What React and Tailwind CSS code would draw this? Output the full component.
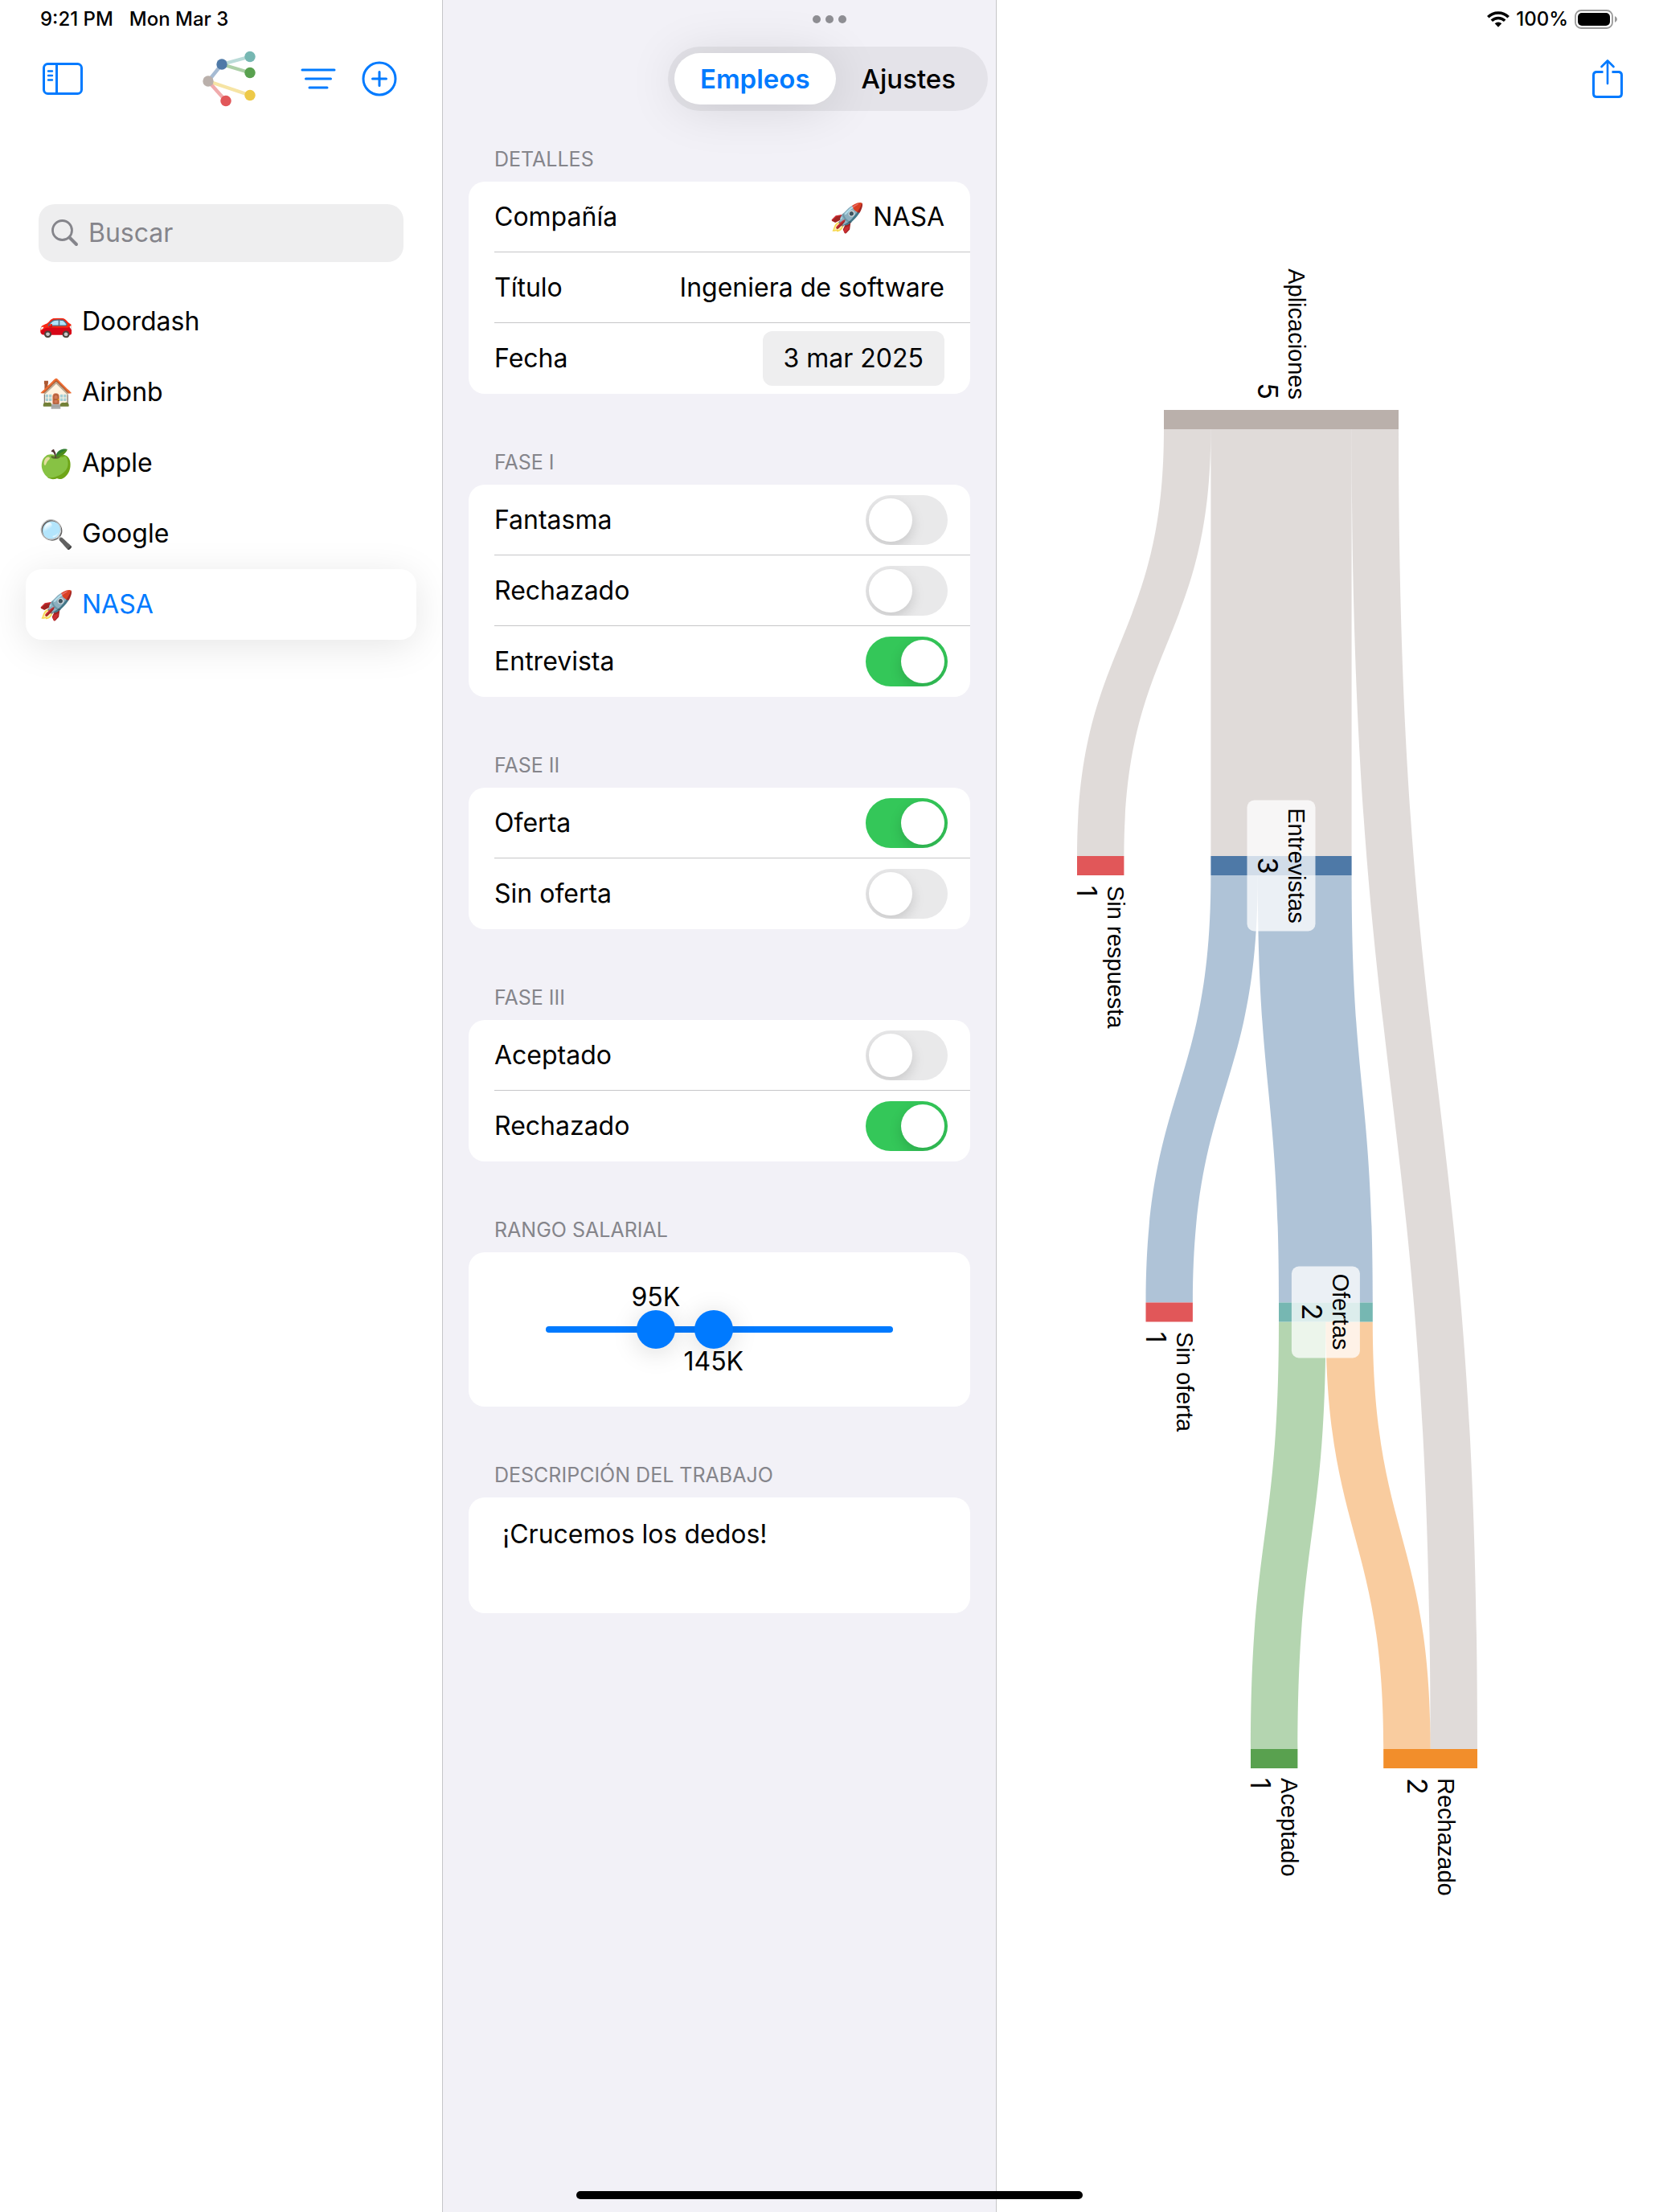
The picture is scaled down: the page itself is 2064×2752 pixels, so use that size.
import React, { useState } from "react";

const sans = "font-['Inter','Noto_Sans',sans-serif]";

function SidebarIcon() {
  return (
    <svg width="52" height="42" viewBox="0 0 52 42" fill="none" stroke="#007aff" strokeWidth="3" strokeLinecap="round">
      <rect x="2.5" y="2.5" width="47" height="37" rx="5" />
      <path d="M18.5 2.5V39.5" />
      <path d="M8 11.5H13M8 17H13M8 22.5H13" strokeWidth="2.4" />
    </svg>
  );
}

function Logo() {
  return (
    <svg width="66" height="70" viewBox="0 0 66 70" fill="none" strokeWidth="4.4">
      <path d="M7 38L24 17" stroke="#a6bbd3" />
      <path d="M24 17L59 7.5" stroke="#badbd8" />
      <path d="M24 17L59 27.5" stroke="#acd0a7" />
      <path d="M7 38L59 55.5" stroke="#f6e4a4" />
      <path d="M7 38L29 62.5" stroke="#f0abac" />
      <circle cx="7" cy="38" r="6.7" fill="#bab0ab" />
      <circle cx="24" cy="17" r="6.7" fill="#4e79a7" />
      <circle cx="59" cy="7.5" r="6.7" fill="#76b7b2" />
      <circle cx="59" cy="27.5" r="6.7" fill="#59a14f" />
      <circle cx="59" cy="55.5" r="6.7" fill="#edc948" />
      <circle cx="29" cy="62.5" r="6.7" fill="#e15759" />
    </svg>
  );
}

function FilterIcon() {
  return (
    <svg width="44" height="44" viewBox="0 0 44 44" fill="none" stroke="#007aff" strokeWidth="3" strokeLinecap="round">
      <path d="M2 11H42M6.5 22H37.5M11 33H33" />
    </svg>
  );
}

function AddIcon() {
  return (
    <svg width="44" height="44" viewBox="0 0 44 44" fill="none" stroke="#007aff" strokeWidth="3" strokeLinecap="round">
      <circle cx="22" cy="22" r="20" />
      <path d="M22 13.5V30.5M13.5 22H30.5" />
    </svg>
  );
}

function ShareIcon() {
  return (
    <svg width="40" height="50" viewBox="0 0 40 50" fill="none" stroke="#007aff" strokeWidth="3" strokeLinecap="round" strokeLinejoin="round">
      <path d="M14.5 16.5H6.5Q2.5 16.5 2.5 20.5V43.5Q2.5 47.5 6.5 47.5H33.5Q37.5 47.5 37.5 43.5V20.5Q37.5 16.5 33.5 16.5H25.5" strokeLinecap="butt" />
      <path d="M20 31V3M12.5 10L20 2.5L27.5 10" strokeWidth="2.6" />
    </svg>
  );
}

function SearchIcon() {
  return (
    <svg width="34" height="34" viewBox="0 0 34 34" fill="none" stroke="#85858b" strokeWidth="2.8" strokeLinecap="round">
      <circle cx="13.5" cy="13.5" r="12" />
      <path d="M22.5 22.5L31 31" strokeWidth="4" />
    </svg>
  );
}

function WifiIcon() {
  return (
    <svg width="28" height="20" viewBox="0 0 28 20" fill="none" stroke="#000" strokeWidth="3.6">
      <path d="M1.3 7.2A18 18 0 0 1 26.7 7.2" />
      <path d="M5.8 11.8A11.8 11.8 0 0 1 22.2 11.8" />
      <path d="M9.7 15.3A6.2 6.2 0 0 1 18.3 15.3L14 19.8Z" fill="#000" stroke="none" />
    </svg>
  );
}

function BatteryIcon() {
  return (
    <svg width="54" height="24" viewBox="0 0 54 24">
      <rect x="1" y="1" width="46" height="22" rx="7" fill="none" stroke="#999" strokeWidth="1.8" />
      <rect x="4" y="4" width="40" height="16" rx="5" fill="#000" />
      <path d="M50 8Q53 9.5 53 12Q53 14.5 50 16Z" fill="#999" />
    </svg>
  );
}

const jobs = [
  { emoji: "🚗", name: "Doordash" },
  { emoji: "🏠", name: "Airbnb" },
  { emoji: "🍏", name: "Apple" },
  { emoji: "🔍", name: "Google" },
  { emoji: "🚀", name: "NASA" },
];

function Company({ emoji, name }) {
  return (
    <span className="flex items-center gap-2.5">
      <span className="flex w-11 justify-center text-[35px]">{emoji}</span>
      <span>{name}</span>
    </span>
  );
}

function Sidebar() {
  return (
    <aside className="min-w-0 border-r border-[#c6c6c8]">
      <div className="flex h-12 items-center gap-5 pl-[50px] text-2xl font-medium">
        <span>9:21 PM</span>
        <span>Mon Mar 3</span>
      </div>
      <div className="flex h-[100px] items-center pl-[52px] pr-14">
        <button aria-label="Barra lateral"><SidebarIcon /></button>
        <span className="ml-auto"><Logo /></span>
        <button aria-label="Filtrar" className="ml-14"><FilterIcon /></button>
        <button aria-label="Añadir" className="ml-8"><AddIcon /></button>
      </div>
      <label className="mx-12 mt-[106px] flex h-[72px] items-center gap-3 rounded-[20px] bg-[#eeeeef] pl-4">
        <SearchIcon />
        <input type="search" placeholder="Buscar" aria-label="Buscar" className="min-w-0 flex-1 bg-transparent outline-none placeholder:text-[#85858b]" />
      </label>
      <ul className="mx-8 mt-[30px]">
        {jobs.map((job) => (
          <li key={job.name}>
            <button
              className={
                job.name === "NASA"
                  ? "flex h-[88px] w-full items-center rounded-[20px] bg-white pl-4 text-[#007aff] shadow-[0_8px_48px_rgba(0,0,0,0.1)]"
                  : "flex h-[88px] w-full items-center pl-4"
              }
            >
              <Company emoji={job.emoji} name={job.name} />
            </button>
          </li>
        ))}
      </ul>
    </aside>
  );
}

function Section({ title, children }) {
  return (
    <section className="mb-10">
      <h2 className="flex h-[73px] items-end px-8 pb-3 text-[25px] leading-8 text-[#85858b]">{title}</h2>
      <div className="overflow-hidden rounded-[20px] bg-white">{children}</div>
    </section>
  );
}

function Row({ children }) {
  return (
    <div className="group pl-8">
      <div className="flex h-[88px] items-center justify-between border-b border-[#c6c6c8] pr-8 group-last:border-transparent">{children}</div>
    </div>
  );
}

function Toggle({ id, label, on }) {
  const [value, setValue] = useState(on);
  return (
    <Row>
      <label htmlFor={id}>{label}</label>
      <input
        id={id}
        type="checkbox"
        role="switch"
        checked={value}
        onChange={(e) => setValue(e.target.checked)}
        className="-mr-1 h-[62px] w-[102px] appearance-none overflow-hidden rounded-full bg-[#e9e9ea] p-1 before:block before:size-[54px] before:rounded-full before:bg-white before:shadow-[0_6px_16px_rgba(0,0,0,0.15)] checked:bg-[#34c759] checked:before:translate-x-10"
      />
    </Row>
  );
}

const thumb =
  "pointer-events-none absolute inset-x-0 top-1/2 h-12 w-full -translate-y-1/2 appearance-none bg-transparent [&::-webkit-slider-thumb]:pointer-events-auto [&::-webkit-slider-thumb]:size-12 [&::-webkit-slider-thumb]:appearance-none [&::-webkit-slider-thumb]:rounded-full [&::-webkit-slider-thumb]:bg-[#007aff] [&::-webkit-slider-thumb]:shadow-[0_4px_32px_rgba(0,0,0,0.15)]";

function SalaryRange() {
  const [low, setLow] = useState(95);
  const [high, setHigh] = useState(145);
  return (
    <div className="px-[72px] py-9">
      <div className="relative h-[120px]">
        <div className="absolute inset-x-6 top-1/2 h-2 -translate-y-1/2 rounded-full bg-[#007aff]" />
        <input aria-label="Salario mínimo" type="range" min="0" max="300" value={low} onChange={(e) => setLow(+e.target.value)} className={thumb} />
        <input aria-label="Salario máximo" type="range" min="0" max="300" value={high} onChange={(e) => setHigh(+e.target.value)} className={thumb} />
        <div className="pointer-events-none absolute inset-x-6 inset-y-0">
          <span className="absolute top-0 -translate-x-1/2 leading-10" style={{ left: `${low / 3}%` }}>{low}K</span>
          <span className="absolute bottom-0 -translate-x-1/2 leading-10" style={{ left: `${high / 3}%` }}>{high}K</span>
        </div>
      </div>
    </div>
  );
}

function Details() {
  return (
    <main className="min-w-0 border-r border-[#c6c6c8] bg-[#f2f1f7]">
      <div className="flex h-12 items-center justify-end gap-1.5 pr-[186px]">
        <i className="size-2.5 rounded-full bg-[#8e8e93]" />
        <i className="size-2.5 rounded-full bg-[#8e8e93]" />
        <i className="size-2.5 rounded-full bg-[#8e8e93]" />
      </div>
      <nav className="flex justify-end pr-2.5 pt-2.5">
        <div className="flex h-20 items-center rounded-full bg-[#e4e3e9] p-2 text-[33px] font-medium">
          <button className="h-16 rounded-full bg-white px-8 font-semibold text-[#007aff] shadow-[0_4px_64px_rgba(0,0,0,0.12)]">Empleos</button>
          <button className="h-16 px-8">Ajustes</button>
        </div>
      </nav>
      <div className="px-8 pt-[15px]">
        <Section title="DETALLES">
          <Row><span>Compañía</span><Company emoji="🚀" name="NASA" /></Row>
          <Row><span>Título</span><span>Ingeniera de software</span></Row>
          <Row><span>Fecha</span><button className="h-[68px] rounded-xl bg-[#eeeeef] px-[26px]">3 mar 2025</button></Row>
        </Section>
        <Section title="FASE I">
          <Toggle id="fantasma" label="Fantasma" on={false} />
          <Toggle id="rechazado-1" label="Rechazado" on={false} />
          <Toggle id="entrevista" label="Entrevista" on />
        </Section>
        <Section title="FASE II">
          <Toggle id="oferta" label="Oferta" on />
          <Toggle id="sin-oferta" label="Sin oferta" on={false} />
        </Section>
        <Section title="FASE III">
          <Toggle id="aceptado" label="Aceptado" on={false} />
          <Toggle id="rechazado-3" label="Rechazado" on />
        </Section>
        <Section title="RANGO SALARIAL">
          <SalaryRange />
        </Section>
        <Section title="DESCRIPCIÓN DEL TRABAJO">
          <textarea aria-label="Descripción del trabajo" defaultValue="¡Crucemos los dedos!" className="block h-36 w-full resize-none bg-transparent px-[42px] py-[26px] leading-10 outline-none" />
        </Section>
      </div>
    </main>
  );
}

const links = [
  { color: "#bab0ab", x0: 1448, x1: 1340, w: 58.4, y0: 534, y1: 1065 },
  { color: "#bab0ab", x0: 1506.4, x1: 1506.4, w: 175.2, y0: 534, y1: 1065 },
  { color: "#bab0ab", x0: 1681.6, x1: 1779.6, w: 58.4, y0: 534, y1: 2176 },
  { color: "#4e79a7", x0: 1506.4, x1: 1425.5, w: 58.4, y0: 1089, y1: 1620.5 },
  { color: "#4e79a7", x0: 1564.8, x1: 1591, w: 116.8, y0: 1089, y1: 1620.5 },
  { color: "#59a14f", x0: 1591, x1: 1556, w: 58.4, y0: 1644.5, y1: 2176 },
  { color: "#f28e2b", x0: 1649.4, x1: 1721.2, w: 58.4, y0: 1644.5, y1: 2176 },
];

const nodes = [
  { label: "Aplicaciones", value: 5, color: "#bab0ab", x: 1448, w: 292, y: 510, ty: 497, anchor: "end" },
  { label: "Sin respuesta", value: 1, color: "#e15759", x: 1340, w: 58.4, y: 1065, ty: 1102, anchor: "start" },
  { label: "Entrevistas", value: 3, color: "#4e79a7", x: 1506.4, w: 175.2, y: 1065, ty: 1077, anchor: "middle", box: 163 },
  { label: "Sin oferta", value: 1, color: "#e15759", x: 1425.5, w: 58.4, y: 1620.5, ty: 1657, anchor: "start" },
  { label: "Ofertas", value: 2, color: "#76b7b2", x: 1591, w: 116.8, y: 1620.5, ty: 1632, anchor: "middle", box: 114 },
  { label: "Aceptado", value: 1, color: "#59a14f", x: 1556, w: 58.4, y: 2176, ty: 2212, anchor: "start" },
  { label: "Rechazado", value: 2, color: "#f28e2b", x: 1721.2, w: 116.8, y: 2176, ty: 2212, anchor: "start" },
];

function ribbon({ x0, x1, w, y0, y1 }) {
  const m = (y0 + y1) / 2;
  return `M${x0} ${y0}C${x0} ${m} ${x1} ${m} ${x1} ${y1}H${x1 + w}C${x1 + w} ${m} ${x0 + w} ${m} ${x0 + w} ${y0}Z`;
}

function Sankey() {
  return (
    <svg viewBox="1240 300 824 2100" className="block w-full" role="img" aria-label="Diagrama de aplicaciones">
      {links.map((l, i) => (
        <path key={i} d={ribbon(l)} fill={l.color} fillOpacity="0.45" />
      ))}
      {nodes.map((n) => (
        <rect key={n.label} x={n.x} y={n.y} width={n.w} height="24" fill={n.color} />
      ))}
      {nodes.map((n) => {
        const c = n.x + n.w / 2;
        return (
          <g key={n.label}>
            {n.box && <rect x={c - 42.5} y={n.y + 12 - n.box / 2} width="85" height={n.box} rx="9" fill="#fff" fillOpacity="0.75" />}
            <text transform={`translate(${c + 9} ${n.ty}) rotate(90)`} textAnchor={n.anchor} fontSize="29" className="font-['Liberation_Sans',sans-serif]">{n.label}</text>
            <text transform={`translate(${c - 29} ${n.ty}) rotate(90)`} textAnchor={n.anchor} fontSize="34" className="font-['Inter',sans-serif]">{n.value}</text>
          </g>
        );
      })}
    </svg>
  );
}

function Chart() {
  return (
    <section className="min-w-0 bg-white">
      <div className="flex h-12 items-center justify-end gap-2 pr-[51px] text-2xl font-medium">
        <WifiIcon />
        <span>100%</span>
        <BatteryIcon />
      </div>
      <div className="flex h-[100px] items-center justify-end pr-11">
        <button aria-label="Compartir"><ShareIcon /></button>
      </div>
      <div className="pt-[152px]">
        <Sankey />
      </div>
    </section>
  );
}

export default function App() {
  return (
    <div className={`relative grid min-h-screen grid-cols-[551fr_689fr_824fr] bg-white text-[32px] leading-10 text-black ${sans}`}>
      <Sidebar />
      <Details />
      <Chart />
      <div className="absolute bottom-4 left-1/2 h-2.5 w-[630px] -translate-x-1/2 rounded-full bg-black" />
    </div>
  );
}
